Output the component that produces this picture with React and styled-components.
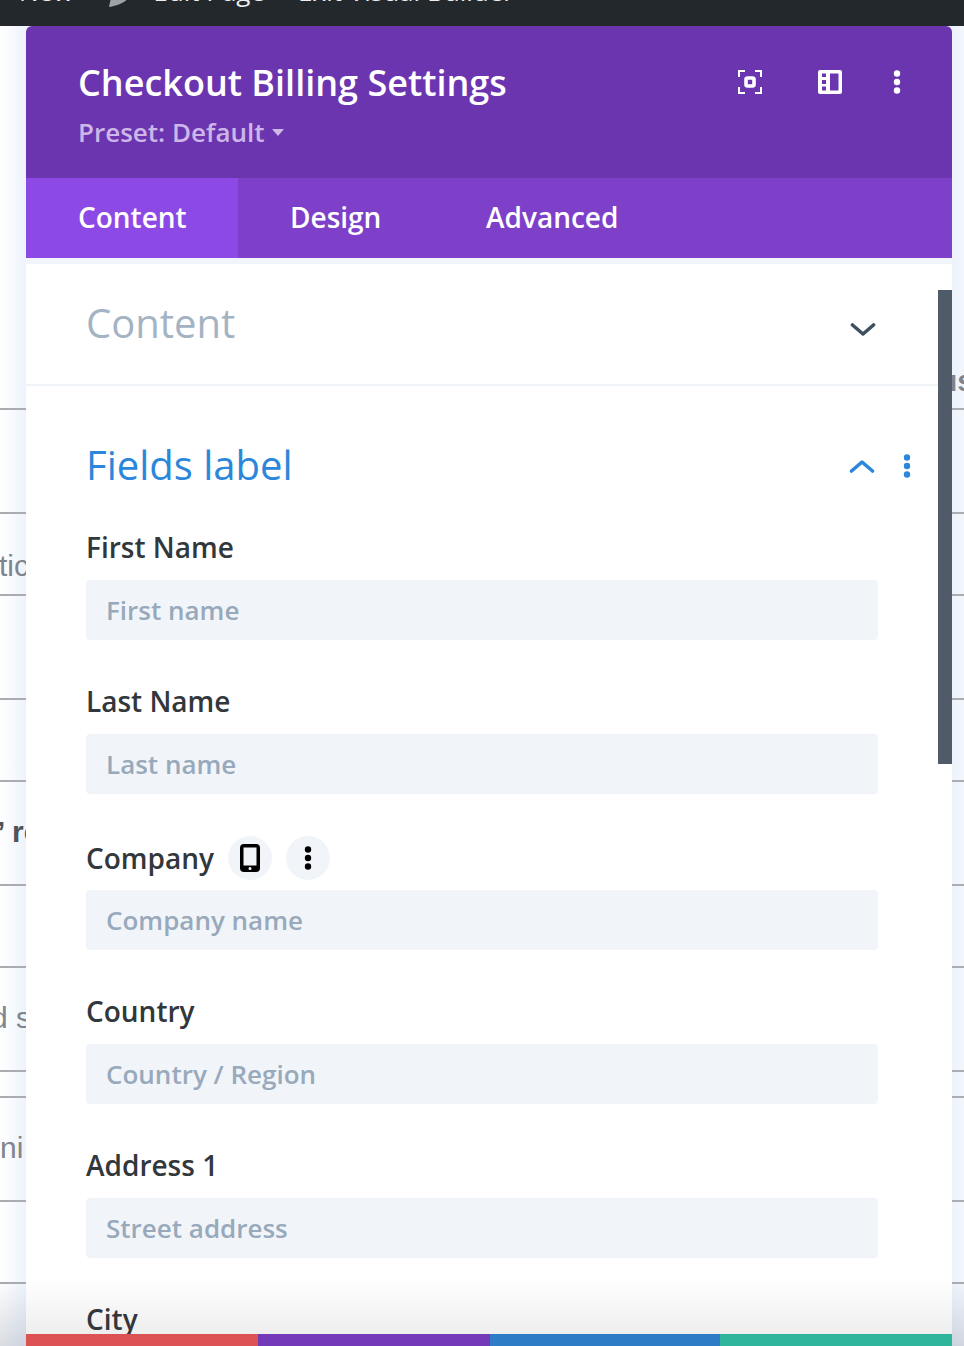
import React from 'react';
import styled, { createGlobalStyle } from 'styled-components';

const Global = createGlobalStyle`
    html, body {
        margin: 0;
        padding: 0;
        background: #fff;
    }
    * {
        box-sizing: border-box;
    }
`;

const Page = styled.div`
    position: relative;
    width: 964px;
    height: 1346px;
    overflow: hidden;
    font-family: "Open Sans", "Liberation Sans", sans-serif;
    background: linear-gradient(90deg, #fff 0, #edf3fc 26px, #edf3fc 952px, #f2f6fd 964px);
`;

const AdminBar = styled.div`
    height: 26px;
    background: #23282d;
    color: #eee;
    display: flex;
    align-items: flex-end;
    padding-left: 19px;
    font-size: 26px;
    line-height: 36px;
    overflow: hidden;
    white-space: nowrap;
`;

const BarItem = styled.span`
    display: block;
    margin-left: ${p => p.$gap || 0}px;
    transform: translateY(-17px);
`;

const BarIcon = styled.svg`
    display: block;
    flex: none;
    width: 22px;
    height: 22px;
    margin-left: 36px;
    margin-bottom: 19px;
`;

const Backdrop = styled.div`
    display: flex;
    flex-direction: column;
    padding-top: ${p => p.$top}px;
`;

const Rule = styled.div`
    height: 2px;
    background: #a9adb2;
    margin-bottom: ${p => p.$after}px;
    position: relative;
`;

const BackText = styled.span`
    position: absolute;
    top: ${p => p.$top}px;
    left: ${p => p.$left}px;
    font-family: "Liberation Sans", sans-serif;
    font-size: 30px;
    line-height: 34px;
    font-weight: ${p => p.$bold ? 700 : 400};
    color: ${p => p.$color || '#80858b'};
    white-space: nowrap;
`;

const PageFade = styled.div`
    position: absolute;
    left: 0;
    right: 0;
    bottom: 0;
    height: 66px;
    background: linear-gradient(180deg, rgba(90,100,120,0) 0, rgba(90,100,120,.22) 100%);
`;

const Modal = styled.div`
    position: absolute;
    top: 26px;
    left: 26px;
    width: 926px;
    height: 1320px;
    background: #fff;
    border-radius: 6px 6px 0 0;
    overflow: hidden;
    display: flex;
    flex-direction: column;
`;

const Header = styled.header`
    height: 152px;
    flex: none;
    background: #6c35b0;
    padding: 32px 51px 0 52px;
    display: flex;
    justify-content: space-between;
    align-items: flex-start;
`;

const Title = styled.h1`
    margin: 0;
    font-size: 36px;
    line-height: 50px;
    font-weight: 600;
    color: #fff;
`;

const Preset = styled.div`
    display: flex;
    align-items: center;
    gap: 7px;
    margin-top: 6px;
    font-size: 26px;
    line-height: 36px;
    font-weight: 600;
    color: #cdb7e8;
`;

const Caret = styled.span`
    width: 0;
    height: 0;
    border-left: 6px solid transparent;
    border-right: 6px solid transparent;
    border-top: 7px solid #cdb7e8;
`;

const HeaderIcons = styled.div`
    display: flex;
    gap: 56px;
    padding-top: 12px;
`;

const HeaderIcon = styled.svg`
    display: block;
    width: 24px;
    height: 24px;
`;

const HeaderDots = styled.div`
    margin-left: -5px;
`;

const Tabs = styled.nav`
    height: 80px;
    flex: none;
    background: #7e3fc9;
    display: flex;
`;

const Tab = styled.div`
    height: 80px;
    padding-left: 52px;
    width: ${p => p.$width}px;
    background: ${p => p.$active ? '#8c49e6' : 'transparent'};
    color: #fff;
    font-size: 28px;
    line-height: 78px;
    font-weight: 600;
`;

const Body = styled.div`
    flex: 1;
    min-height: 0;
    position: relative;
    border-top: 6px solid #f1f5f9;
    overflow: hidden;
`;

const Toggle = styled.div`
    height: ${p => p.$height}px;
    padding: ${p => p.$pad}px 76px 0 60px;
    display: flex;
    align-items: flex-start;
    justify-content: space-between;
    border-bottom: ${p => p.$line ? '2px solid #f1f5f9' : '0 none'};
`;

const ToggleTitle = styled.h2`
    margin: 0;
    font-size: 40px;
    line-height: 56px;
    font-weight: 400;
    color: ${p => p.$open ? '#2b87da' : '#a3b3c4'};
`;

const ToggleIcons = styled.div`
    display: flex;
    align-items: center;
    gap: 28px;
    padding-top: ${p => p.$open ? 17 : 27}px;
    margin-right: ${p => p.$open ? -35 : 0}px;
`;

const Chevron = styled.svg`
    display: block;
    width: 26px;
    height: 16px;
`;

const Dots = styled.svg`
    display: block;
    width: 8px;
    height: 24px;
`;

const Fields = styled.div`
    position: relative;
    padding: 0 74px 0 60px;
    display: flex;
    flex-direction: column;
`;

const Field = styled.div`
    display: flex;
    flex-direction: column;
    margin-bottom: 34px;
`;

const LabelRow = styled.div`
    display: flex;
    align-items: center;
    height: ${p => p.$tall ? 64 : 62}px;
    padding-bottom: ${p => p.$tall ? 0 : 4}px;
    gap: 14px;
    margin-top: -2px;
`;

const Label = styled.label`
    font-size: 28px;
    line-height: 40px;
    font-weight: 600;
    color: #32373c;
`;

const RoundButton = styled.span`
    width: 44px;
    height: 44px;
    border-radius: 50%;
    background: #f1f5f9;
    display: flex;
    align-items: center;
    justify-content: center;
`;

const Input = styled.input`
    display: block;
    width: 100%;
    height: 60px;
    border: 0 none;
    border-radius: 4px;
    background: #f1f5f9;
    padding: 0 20px;
    font-family: inherit;
    font-size: 26px;
    font-weight: 600;
    color: #32373c;
    &::placeholder {
        color: #98a9bc;
        opacity: 1;
    }
`;

const Fade = styled.div`
    position: absolute;
    left: 0;
    right: 0;
    bottom: 12px;
    height: 56px;
    background: linear-gradient(180deg, rgba(238,238,238,0) 0, #eee 100%);
`;

const Scrollbar = styled.div`
    position: absolute;
    top: 26px;
    right: 0;
    width: 14px;
    height: 474px;
    background: #4f5b69;
`;

const Footer = styled.div`
    position: absolute;
    left: 0;
    right: 0;
    bottom: 0;
    height: 12px;
    display: flex;
`;

const FooterPart = styled.div`
    width: ${p => p.$width}px;
    background: ${p => p.$color};
`;

const fields = [
    { label: 'First Name', placeholder: 'First name' },
    { label: 'Last Name', placeholder: 'Last name' },
    { label: 'Company', placeholder: 'Company name', hover: true },
    { label: 'Country', placeholder: 'Country / Region' },
    { label: 'Address 1', placeholder: 'Street address' },
];

const rules = [
    { after: 102 },
    { after: 80, text: { word: 'tic', top: 37, left: -1 } },
    { after: 102 },
    { after: 80 },
    { after: 102, text: { word: '’ re', top: 35, left: -3, bold: true, color: '#4e5359' } },
    { after: 80 },
    { after: 102, text: { word: 'd s', top: 35, left: -9 } },
    { after: 24 },
    { after: 102, text: { word: 'ni', top: 35, left: 0 } },
    { after: 80 },
    { after: 0 },
];

const VerticalDots = ({ color }) => (
    <Dots viewBox="0 0 8 24" fill={color}>
        <circle cx="4" cy="3.5" r="3.2" />
        <circle cx="4" cy="12" r="3.2" />
        <circle cx="4" cy="20.5" r="3.2" />
    </Dots>
);

function App() {
    return (
        <Page>
            <Global />
            <AdminBar>
                <BarItem>New</BarItem>
                <BarIcon viewBox="0 0 22 22" fill="#9ea3a8">
                    <path d="M0 22c1-4 1-8 4-12l14-10 4 10c-4 6-10 10-22 12z" />
                </BarIcon>
                <BarItem $gap={22}>Edit Page</BarItem>
                <BarItem $gap={33}>Exit Visual Builder</BarItem>
            </AdminBar>
            <Backdrop $top={382}>
                {rules.map((rule, i) => (
                    <Rule key={i} $after={rule.after}>
                        {rule.text && (
                            <BackText
                                $top={rule.text.top}
                                $left={rule.text.left}
                                $bold={rule.text.bold}
                                $color={rule.text.color}
                            >
                                {rule.text.word}
                            </BackText>
                        )}
                    </Rule>
                ))}
            </Backdrop>
            <BackText $top={364} $left={939} $bold>us</BackText>
            <PageFade />

            <Modal>
                <Header>
                    <div>
                        <Title>Checkout Billing Settings</Title>
                        <Preset>Preset: Default<Caret /></Preset>
                    </div>
                    <HeaderIcons>
                        <HeaderIcon viewBox="0 0 24 24" fill="none" stroke="#fff" strokeWidth="2">
                            <path d="M7 1H1v6M17 1h6v6M7 23H1v-6M17 23h6v-6" />
                            <rect x="8" y="8" width="8" height="8" rx="1.500" strokeWidth="3.6" />
                        </HeaderIcon>
                        <HeaderIcon viewBox="0 0 24 24" fill="#fff">
                            <path fillRule="evenodd" d="M2 0h20a2 2 0 0 1 2 2v20a2 2 0 0 1-2 2H2a2 2 0 0 1-2-2V2a2 2 0 0 1 2-2zM4 3.500v3.500h4V3.500zM4 10v4h4v-4zM4 16.500v4h4v-4zM12 3.500v17h8.500v-17z" />
                        </HeaderIcon>
                        <HeaderDots>
                            <VerticalDots color="#fff" />
                        </HeaderDots>
                    </HeaderIcons>
                </Header>
                <Tabs>
                    <Tab $active $width={212}>Content</Tab>
                    <Tab $width={196}>Design</Tab>
                    <Tab $width={300}>Advanced</Tab>
                </Tabs>
                <Body>
                    <Fade />
                    <Toggle $height={122} $pad={31} $line>
                        <ToggleTitle>Content</ToggleTitle>
                        <ToggleIcons>
                            <Chevron viewBox="0 0 26 16" fill="none" stroke="#3e5062" strokeWidth="3.6" strokeLinecap="round" strokeLinejoin="round">
                                <path d="M2.500 3l10.500 9 10.500-9" />
                            </Chevron>
                        </ToggleIcons>
                    </Toggle>
                    <Toggle $height={134} $pad={51}>
                        <ToggleTitle $open>Fields label</ToggleTitle>
                        <ToggleIcons $open>
                            <Chevron viewBox="0 0 26 16" fill="none" stroke="#2b87da" strokeWidth="3.6" strokeLinecap="round" strokeLinejoin="round">
                                <path d="M2.500 13l10.500-9 10.500 9" />
                            </Chevron>
                            <VerticalDots color="#2b87da" />
                        </ToggleIcons>
                    </Toggle>
                    <Fields>
                        {fields.map(field => (
                            <Field key={field.label}>
                                <LabelRow $tall={field.hover}>
                                    <Label>{field.label}</Label>
                                    {field.hover && (
                                        <>
                                            <RoundButton>
                                                <svg width="20" height="28" viewBox="0 0 20 28">
                                                    <path fillRule="evenodd" d="M4 0h12a4 4 0 0 1 4 4v20a4 4 0 0 1-4 4H4a4 4 0 0 1-4-4V4a4 4 0 0 1 4-4zM3.500 3.500v18h13v-18zM10 23a1.500 1.500 0 1 0 0 3 1.500 1.500 0 0 0 0-3z" />
                                                </svg>
                                            </RoundButton>
                                            <RoundButton>
                                                <VerticalDots color="#000" />
                                            </RoundButton>
                                        </>
                                    )}
                                </LabelRow>
                                <Input placeholder={field.placeholder} readOnly />
                            </Field>
                        ))}
                        <Field>
                            <LabelRow><Label>City</Label></LabelRow>
                        </Field>
                    </Fields>
                    <Scrollbar />
                    <Footer>
                        <FooterPart $width={232} $color="#dc5151" />
                        <FooterPart $width={232} $color="#7339b8" />
                        <FooterPart $width={230} $color="#2e7cc6" />
                        <FooterPart $width={232} $color="#2fb59b" />
                    </Footer>
                </Body>
            </Modal>
        </Page>
    );
}

export default App;
